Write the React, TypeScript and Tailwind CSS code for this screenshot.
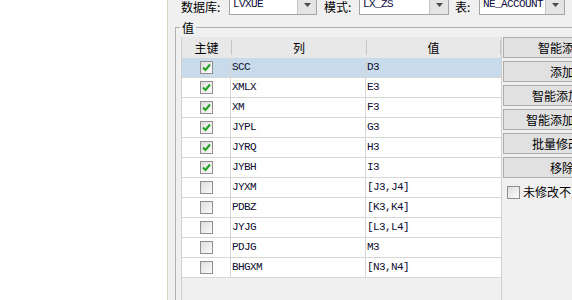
import React from "react";

const CJK = { fontFamily: '"Noto Sans CJK SC", "Noto Sans", sans-serif' };
const MONO = { fontFamily: '"Liberation Mono", "DejaVu Sans Mono", monospace' };

const rows: [string, string, boolean][] = [
  ["SCC", "D3", true],
  ["XMLX", "E3", true],
  ["XM", "F3", true],
  ["JYPL", "G3", true],
  ["JYRQ", "H3", true],
  ["JYBH", "I3", true],
  ["JYXM", "[J3,J4]", false],
  ["PDBZ", "[K3,K4]", false],
  ["JYJG", "[L3,L4]", false],
  ["PDJG", "M3", false],
  ["BHGXM", "[N3,N4]", false],
];

function Check({ checked }: { checked: boolean }) {
  return (
    <div className="w-[13px] h-[13px] shrink-0 border border-[#8f8f8f] bg-linear-to-br from-[#dedede] to-[#fbfbfb] flex items-center justify-center">
      {checked && (
        <svg width="11" height="11" viewBox="0 0 11 11">
          <path d="M2 5.5 L4.5 8 L9 2.5" fill="none" stroke="#21a121" strokeWidth="2" />
        </svg>
      )}
    </div>
  );
}

function Combo({ w, text }: { w: string; text: string }) {
  return (
    <div className={`${w} h-[21px] border border-[#a5a5a5] bg-white flex shrink-0`}>
      <div
        className="flex-1 flex items-center pl-[3px] text-[11px] tracking-[-0.6px] text-[#0c0c40] overflow-hidden whitespace-nowrap"
        style={MONO}
      >
        {text}
      </div>
      <div className="w-[19px] h-full border-l border-[#c4c4c4] bg-[#e4e4e4] flex items-center justify-center">
        <svg width="7" height="4" viewBox="0 0 7 4">
          <path d="M0 0 L7 0 L3.5 4 Z" fill="#4a4a4a" />
        </svg>
      </div>
    </div>
  );
}

function Btn({ text }: { text: string }) {
  return (
    <div
      className="w-[118px] h-[21px] shrink-0 border border-[#adadad] bg-[#e1e1e1] flex items-center justify-center text-[12px] leading-[14px] text-black whitespace-nowrap"
      style={CJK}
    >
      {text}
    </div>
  );
}

export default function App() {
  return (
    <div className="w-[572px] h-[300px] overflow-hidden flex bg-white">
      <div className="w-[167px] h-full bg-white shrink-0" />
      <div className="w-px h-full bg-[#d6d3c3] shrink-0" />
      <div className="flex-1 h-full bg-[#f0f0f0] flex flex-col min-w-0 overflow-hidden">
        {/* top row */}
        <div className="flex items-start h-[21px] -mt-[6px] pl-[13px] shrink-0 overflow-hidden">
          <div className="w-[48px] shrink-0 mt-[7px] text-[12px] leading-[12px] text-black whitespace-nowrap" style={CJK}>
            数据库:
          </div>
          <Combo w="w-[88px]" text="LVXUE" />
          <div className="ml-[7px] w-[35px] shrink-0 mt-[7px] text-[12px] leading-[12px] text-black whitespace-nowrap" style={CJK}>
            模式:
          </div>
          <Combo w="w-[90px]" text="LX_ZS" />
          <div className="ml-[6px] w-[24px] shrink-0 mt-[7px] text-[12px] leading-[12px] text-black whitespace-nowrap" style={CJK}>
            表:
          </div>
          <Combo w="w-[86px]" text="NE_ACCOUNT" />
          <div className="ml-[8px] w-[20px] h-[21px] border border-[#adadad] bg-[#e1e1e1] shrink-0" />
        </div>

        {/* group box */}
        <div className="relative mt-[12px] ml-[7px] flex-1 border-t border-l border-[#b0b0b0] pt-[9px] pl-[5px] flex min-h-0">
          <div
            className="absolute left-[4px] -top-[7px] px-[2px] bg-[#f0f0f0] text-[12px] leading-[14px] text-black"
            style={CJK}
          >
            值
          </div>

          {/* table */}
          <div className="w-[321px] shrink-0 border-l border-r border-[#d0d0d0] flex flex-col bg-[#f0f0f0]">
            <div className="h-[21px] shrink-0 flex bg-[#e8e8e8] text-[12px] leading-[14px] text-black" style={CJK}>
              <div className="w-[49px] flex items-center justify-center">主键</div>
              <div className="w-px my-[3px] bg-[#c6c6c6]" />
              <div className="w-[134px] flex items-center justify-center">列</div>
              <div className="w-px my-[3px] bg-[#c6c6c6]" />
              <div className="w-[133px] flex items-center justify-center">值</div>
              <div className="w-px my-[3px] bg-[#c6c6c6]" />
            </div>
            {rows.map(([col, val, checked], i) => (
              <div
                key={col}
                className={`h-[20px] shrink-0 flex border-b border-[#d6d6d6] ${i === 0 ? "bg-[#c8dbea]" : "bg-white"}`}
              >
                <div className="w-[49px] border-r border-[#d6d6d6] flex items-center justify-center">
                  <Check checked={checked} />
                </div>
                <div
                  className="w-[135px] border-r border-[#d6d6d6] flex items-center pl-[1px] text-[11px] tracking-[-0.6px] text-[#0c0c30]"
                  style={MONO}
                >
                  {col}
                </div>
                <div
                  className="w-[134px] flex items-center pl-[1px] text-[11px] tracking-[-0.6px] text-[#0c0c30]"
                  style={MONO}
                >
                  {val}
                </div>
              </div>
            ))}
            <div className="flex-1" />
          </div>

          {/* buttons */}
          <div className="ml-[1px] flex flex-col gap-[3px] shrink-0">
            <Btn text="智能添加" />
            <Btn text="添加" />
            <Btn text="智能添加列" />
            <Btn text="智能添加全部" />
            <Btn text="批量修改值" />
            <Btn text="移除" />
            <div className="mt-[4px] ml-[4px] flex items-center">
              <Check checked={false} />
              <span className="ml-[3px] text-[12px] leading-[14px] text-black whitespace-nowrap" style={CJK}>
                未修改不更新
              </span>
            </div>
          </div>
        </div>
      </div>
    </div>
  );
}
